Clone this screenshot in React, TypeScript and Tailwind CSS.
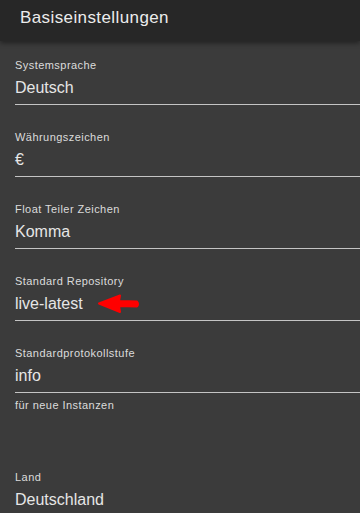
export default function App() {
  const fields = [
    { label: 'Systemsprache', value: 'Deutsch' },
    { label: 'Währungszeichen', value: '€' },
    { label: 'Float Teiler Zeichen', value: 'Komma' },
    { label: 'Standard Repository', value: 'live-latest', arrow: true },
    { label: 'Standardprotokollstufe', value: 'info', hint: 'für neue Instanzen' },
    { label: 'Land', value: 'Deutschland' },
  ]
  return (
    <div
      className="w-[360px] h-[513px] overflow-hidden bg-[#3b3b3b] flex flex-col"
      style={{ fontFamily: '"Liberation Sans", Arial, sans-serif' }}
    >
      <div className="h-[41px] shrink-0 bg-[#272727] pl-[20px] pt-[8px] text-[17px] leading-[20px] tracking-[0.4px] text-[#ececec] shadow-[0_2px_5px_rgba(0,0,0,0.45)] relative z-10">
        Basiseinstellungen
      </div>
      <div className="pl-[15px] flex flex-col">
        {fields.map((f, i) => (
          <div key={f.label}>
            <div className={`border-b border-[#c4c4c4] pb-[6px] ${i === 0 ? 'pt-[17px]' : 'pt-[25px]'}`}>
              <div className="text-[11px] leading-[14px] tracking-[0.45px] text-[#dcdcdc]">{f.label}</div>
              <div className="mt-[6px] h-[20px] text-[16px] leading-[20px] text-[#e6e6e6] flex items-center">
                <span>{f.value}</span>
                {f.arrow && (
                  <svg width="44" height="22" viewBox="0 0 44 22" className="ml-[14px] -my-[1px]">
                    <path d="M2 10.5 L23 2.5 L22 8 L40 8.5 Q42 11 40 13.5 L22 13 L23 19 Z" fill="#ff0000" stroke="#ff0000" strokeWidth="2" strokeLinejoin="round" />
                  </svg>
                )}
              </div>
            </div>
            {f.hint && (
              <div className="h-[52px] pt-[5px] text-[11px] leading-[14px] tracking-[0.45px] text-[#dcdcdc]">{f.hint}</div>
            )}
          </div>
        ))}
      </div>
    </div>
  )
}
